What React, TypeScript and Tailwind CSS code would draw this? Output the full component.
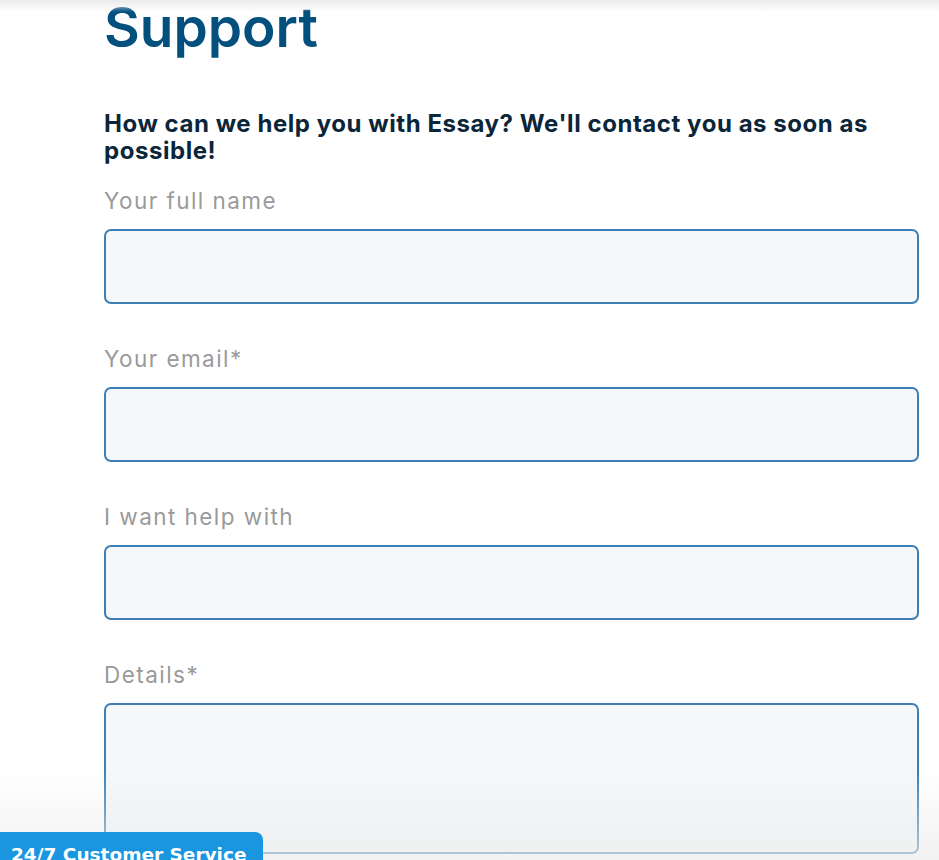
const fields = [
  { label: 'Your full name', tall: false },
  { label: 'Your email*', tall: false },
  { label: 'I want help with', tall: false },
  { label: 'Details*', tall: true },
];

export default function App() {
  return (
    <div className="relative h-[860px] overflow-hidden bg-white font-['Inter',sans-serif]">
      <div className="pointer-events-none absolute inset-x-0 top-0 h-[12px] bg-gradient-to-b from-[#ebebeb] to-white/0" />
      <div className="ml-[104px] w-[815px]">
        <h1 className="text-[55px] font-semibold leading-[54px] text-[#03507f]">Support</h1>
        <p className="mt-[56px] text-[24px] font-bold leading-[27px] tracking-[0.55px] text-[#0b2539]">
          How can we help you with Essay? We'll contact you as soon as possible!
        </p>
        <div className="mt-[22px] flex flex-col">
          {fields.map((f) => (
            <label key={f.label} className="mb-[40px] flex flex-col">
              <span className="text-[22.5px] leading-[30px] tracking-[1.45px] text-[#9a9a9a]">{f.label}</span>
              <span
                className={`mt-[13px] block w-full rounded-[7px] border-2 border-[#3d7fb4] bg-[#f5f7f9] ${
                  f.tall ? 'h-[151px]' : 'h-[75px]'
                }`}
              />
            </label>
          ))}
        </div>
      </div>
      <div className="pointer-events-none absolute inset-x-0 bottom-0 h-[90px] bg-gradient-to-b from-white/0 to-[#ececec]/70" />
      <button className="absolute bottom-[-8px] left-0 h-[36px] w-[263px] rounded-tr-[8px] bg-[#1a95e0] pl-[11px] pt-[10px] text-left font-['DejaVu_Sans',sans-serif] text-[18.5px] font-bold leading-[22px] text-white">
        24/7 Customer Service
      </button>
    </div>
  );
}
